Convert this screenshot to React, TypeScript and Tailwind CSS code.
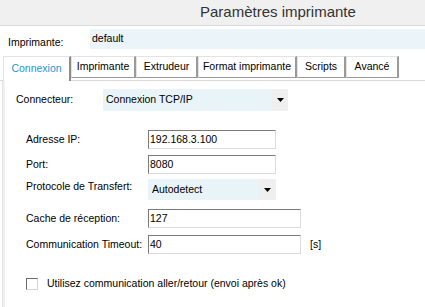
import React from "react";

const font = { fontFamily: '"Liberation Sans", Arial, sans-serif' };

function Arrow() {
  return (
    <svg width="7" height="4" viewBox="0 0 7 4">
      <path d="M0 0 H7 L3.5 4 Z" fill="#000" />
    </svg>
  );
}

function TextBox({ value, w }: { value: string; w: string }) {
  return (
    <div
      className={`${w} h-[19px] bg-white border border-t-[#7a7a7a] border-l-[#7a7a7a] border-r-[#dcdcdc] border-b-[#dcdcdc] pl-[1px] flex items-center text-[10.5px] text-black leading-none`}
    >
      {value}
    </div>
  );
}

export default function App() {
  const tabs = [
    { t: "Imprimante", w: "w-[65px]" },
    { t: "Extrudeur", w: "w-[62px]" },
    { t: "Format imprimante", w: "w-[99px]" },
    { t: "Scripts", w: "w-[49px]" },
    { t: "Avancé", w: "w-[53px]" },
  ];
  return (
    <div className="w-[425px] h-[307px] bg-white overflow-hidden text-[10.5px] text-black" style={font}>
      {/* Title bar */}
      <div className="h-[26px] bg-[#f0f0f0] border-b border-[#dadada] flex items-center pl-[200px]">
        <span className="text-[15px] text-[#333]">Paramètres imprimante</span>
      </div>

      {/* Printer row */}
      <div className="h-[29px] flex items-start pt-[3px]">
        <span className="w-[90px] pl-[8px] pt-[6px]">Imprimante:</span>
        <div className="flex-1 h-[20px] bg-[#ebf4f8] flex items-center pl-[2px]">default</div>
      </div>

      {/* Tabs */}
      <div className="h-[26px] flex items-end pl-[3px] border-b border-[#d9d9d9] relative">
        <div className="h-[25px] w-[68px] bg-white border-t border-l border-[#e3e3e3] border-r-2 border-r-[#8c8c8c] flex items-center justify-center text-[#1e95d4] -mb-[1px] relative z-10">
          Connexion
        </div>
        {tabs.map(({ t, w }) => (
          <div
            key={t}
            className={`${w} h-[22px] mb-[2px] bg-white border-t border-l border-[#e3e3e3] border-r-2 border-r-[#9a9a9a] border-b border-b-[#9a9a9a] flex items-center justify-center`}
          >
            {t}
          </div>
        ))}
      </div>

      {/* Content */}
      <div className="flex h-[226px]">
        <div className="w-[5px] flex">
          <div className="w-[2px]" />
          <div className="w-[1px] bg-[#e3e3e3]" />
          <div className="w-[2px] bg-[#f0f0f0]" />
        </div>
        <div className="flex-1 flex flex-col">
          {/* Connecteur */}
          <div className="flex items-center mt-[8px] h-[22px]">
            <span className="w-[98px] pl-[11px]">Connecteur:</span>
            <div className="w-[185px] h-[22px] flex">
              <div className="flex-1 bg-[#e9f4f8] flex items-center pl-[3px]">Connexion TCP/IP</div>
              <div className="w-[16px] bg-[#efefef] flex items-center justify-center">
                <Arrow />
              </div>
            </div>
          </div>

          <div className="flex flex-col gap-[6px] mt-[19px] pl-[21px]">
            <div className="flex items-center h-[19px]">
              <span className="w-[122px]">Adresse IP:</span>
              <TextBox value="192.168.3.100" w="w-[128px]" />
            </div>
            <div className="flex items-center h-[19px]">
              <span className="w-[122px]">Port:</span>
              <TextBox value="8080" w="w-[128px]" />
            </div>
            <div className="flex items-center h-[21px] mt-[-1px]">
              <span className="w-[122px] -mt-[6px]">Protocole de Transfert:</span>
              <div className="w-[128px] h-[21px] flex">
                <div className="flex-1 bg-[#e9f4f8] flex items-center pl-[4px]">Autodetect</div>
                <div className="w-[17px] bg-[#efefef] flex items-center justify-center">
                  <Arrow />
                </div>
              </div>
            </div>
            <div className="flex items-center h-[19px] mt-[3px]">
              <span className="w-[122px]">Cache de réception:</span>
              <TextBox value="127" w="w-[153px]" />
            </div>
            <div className="flex items-center h-[19px] mt-[1px]">
              <span className="w-[122px]">Communication Timeout:</span>
              <TextBox value="40" w="w-[153px]" />
              <span className="ml-[9px]">[s]</span>
            </div>
          </div>

          <div className="flex items-center mt-[22px] pl-[21px]">
            <div className="w-[12px] h-[12px] bg-white border border-t-[#6a6a6a] border-l-[#6a6a6a] border-r-[#d4d4d4] border-b-[#d4d4d4]" />
            <span className="ml-[9px]">Utilisez communication aller/retour (envoi après ok)</span>
          </div>
        </div>
      </div>
    </div>
  );
}
